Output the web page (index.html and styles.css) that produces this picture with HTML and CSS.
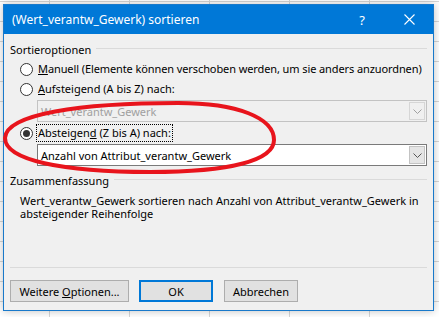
FILE: index.html
```html
<!DOCTYPE html>
<html lang="de">
<head>
  <meta charset="UTF-8" />
  <title>(Wert_verantw_Gewerk) sortieren</title>
  <link rel="stylesheet" href="styles.css">
</head>
<body>
  <div class="dialog">
    <div class="titlebar">
      <span class="title">(Wert_verantw_Gewerk) sortieren</span>
      <span class="tb-help">?</span>
      <span class="tb-close">
        <svg width="11" height="11" viewBox="0 0 11 11"><path d="M0.5 0.5 L10.5 10.5 M10.5 0.5 L0.5 10.5" stroke="#fff" stroke-width="1.1" fill="none"/></svg>
      </span>
    </div>

    <div class="content">
      <div class="group-head"><span>Sortieroptionen</span><span class="rule"></span></div>

      <div class="radio-row">
        <span class="radio"></span>
        <span class="label tight"><u>M</u>anuell (Elemente können verschoben werden, um sie anders anzuordnen)</span>
      </div>
      <div class="radio-row">
        <span class="radio"></span>
        <span class="label"><u>A</u>ufsteigend (A bis Z) nach:</span>
      </div>
      <div class="combo disabled">
        <span class="combo-text">Wert_verantw_Gewerk</span>
        <span class="combo-btn"><svg width="9" height="5" viewBox="0 0 9 5"><path d="M0.5 0.5 L4.5 4.5 L8.5 0.5" stroke="#a0a0a0" fill="none"/></svg></span>
      </div>
      <div class="radio-row tall">
        <span class="radio checked"></span>
        <span class="label focus">Absteigen<u>d</u> (Z bis A) nach:</span>
      </div>
      <div class="combo">
        <span class="combo-text">Anzahl von Attribut_verantw_Gewerk</span>
        <span class="combo-btn"><svg width="9" height="5" viewBox="0 0 9 5"><path d="M0.5 0.5 L4.5 4.5 L8.5 0.5" stroke="#555" fill="none"/></svg></span>
      </div>

      <div class="group-head second"><span>Zusammenfassung</span><span class="rule"></span></div>
      <p class="summary">Wert_verantw_Gewerk sortieren nach Anzahl von Attribut_verantw_Gewerk in absteigender Reihenfolge</p>

      <div class="sep"></div>
      <div class="buttons">
        <button class="btn wide">Weitere <u>O</u>ptionen...</button>
        <button class="btn default">OK</button>
        <button class="btn">Abbrechen</button>
      </div>
    </div>
  </div>

  <!-- rote Markierung -->
  <svg class="marker" width="439" height="317" viewBox="0 0 439 317">
    <path d="M5 138 C6 114 80 103 178 103 C238 103 274 118 274 140 C274 160 232 172 150 172 C62 172 5 160 5 138 Z" stroke="#e8141c" stroke-width="4" fill="none"/>
  </svg>
</body>
</html>
```

FILE: styles.css
```css
body {
  margin: 0;
  padding: 4px 0 0 3px;
  width: 439px;
  height: 317px;
  box-sizing: border-box;
  overflow: hidden;
  position: relative;
  font-family: "Noto Sans", "Open Sans", sans-serif;
  font-size: 11px;
  color: #000;
  background-color: #fff;
  background-image:
    linear-gradient(#d6d6d6 1px, transparent 1px),
    linear-gradient(90deg, #d6d6d6 1px, transparent 1px);
  background-size: 100% 20px, 80px 100%;
  background-position: 0 1px, 49px 0;
}

.dialog {
  width: 431px;
  height: 307px;
  box-sizing: border-box;
  border: 1px solid #1979ca;
  background: #f0f0f0;
  display: flex;
  flex-direction: column;
  box-shadow: 0 0 8px rgba(0, 0, 0, 0.25);
}

.titlebar {
  height: 29px;
  background: #0078d7;
  color: #fff;
  display: flex;
  align-items: center;
  padding-left: 8px;
  font-size: 12px;
}
.title { flex: 1; }
.tb-help { width: 20px; text-align: center; margin-right: 27px; font-size: 13px; }
.tb-close { width: 20px; display: flex; justify-content: center; margin-right: 14px; }

.content {
  flex: 1;
  display: flex;
  flex-direction: column;
  padding: 7px 6px 8px 6px;
}

.group-head {
  display: flex;
  align-items: center;
  height: 16px;
  margin-bottom: 2px;
}
.group-head .rule { flex: 1; height: 1px; background: #dadada; margin-left: 5px; margin-top: -2px; }
.group-head.second { margin-top: 6px; }

.radio-row {
  display: flex;
  align-items: center;
  height: 20px;
  padding-left: 10px;
  white-space: nowrap;
}
.radio-row.tall { height: 22px; }
.radio {
  flex: none;
  width: 13px;
  height: 13px;
  box-sizing: border-box;
  border: 1px solid #333;
  border-radius: 50%;
  background: #fff;
  margin-right: 4px;
  display: flex;
  align-items: center;
  justify-content: center;
}
.radio.checked::after {
  content: "";
  width: 7px;
  height: 7px;
  border-radius: 50%;
  background: #333;
}
.label { padding: 1px 1px; line-height: 14px; }
.label.tight { letter-spacing: -0.1px; }
.focus { outline: 1px dotted #000; outline-offset: 0; }

.combo {
  display: flex;
  align-items: center;
  height: 22px;
  margin-left: 27px;
  box-sizing: border-box;
  border: 1px solid #7a7a7a;
  background: #fff;
}
.combo.disabled {
  margin-top: 1px;
  border-color: #c3c3c3;
  background: #f0f0f0;
  color: #a0a0a0;
}
.combo-text { flex: 1; padding-left: 3px; }
.combo-btn {
  width: 16px;
  height: 18px;
  margin-right: 1px;
  box-sizing: border-box;
  border: 1px solid #c3c3c3;
  background: #e5e5e5;
  display: flex;
  align-items: center;
  justify-content: center;
}
.combo.disabled .combo-btn { background: #f0f0f0; border-color: #d6d6d6; }

.summary {
  margin: 4px 0 0 0;
  padding-left: 10px;
  line-height: 13px;
  width: 400px;
}

.sep { margin-top: auto; height: 1px; background: #dadada; }

.buttons {
  display: flex;
  gap: 10px;
  margin-top: 12px;
}
.btn {
  font-family: inherit;
  font-size: 11px;
  height: 22px;
  width: 74px;
  padding: 0;
  box-sizing: border-box;
  border: 1px solid #adadad;
  background: #e1e1e1;
  color: #000;
}
.btn.wide { width: 119px; }
.btn.default { border: 2px solid #0078d7; margin-right: 1px; }

.marker {
  position: absolute;
  left: 0;
  top: 0;
  pointer-events: none;
}
```
